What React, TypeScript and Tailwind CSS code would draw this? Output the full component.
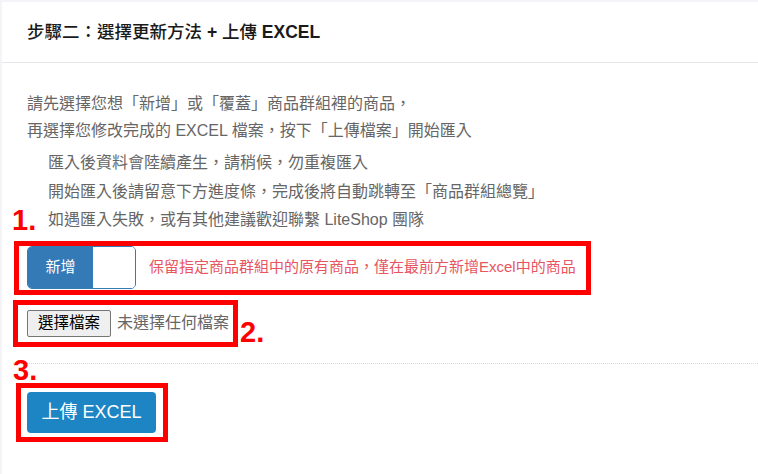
export default function App() {
  const font = { fontFamily: '"Liberation Sans", "Noto Sans CJK TC", sans-serif' };

  return (
    <div className="h-[474px] w-[758px] overflow-hidden bg-[#f4f4f8] pl-[2px] pt-[2px]" style={font}>
      <div className="h-full bg-white">
        {/* header */}
        <div className="flex h-[61px] items-center border-b border-[#e6e6ea] px-[25px]">
          <h2 className="pt-[1px] text-[17.5px] font-medium text-[#1a1a1a]">
            步驟二：選擇更新方法 <span className="font-bold">+</span> 上傳 <span className="font-bold">EXCEL</span>
          </h2>
        </div>

        <div className="pl-[11px] pt-[27px]">
          <div className="pl-[14px] text-[16px] text-[#666]">
            <p className="leading-[27px]">請先選擇您想「新增」或「覆蓋」商品群組裡的商品，</p>
            <p className="leading-[27px]">再選擇您修改完成的 EXCEL 檔案，按下「上傳檔案」開始匯入</p>
            <ul className="mt-[5px] pl-[21px] leading-[28.5px]">
              <li>匯入後資料會陸續產生，請稍候，勿重複匯入</li>
              <li>開始匯入後請留意下方進度條，完成後將自動跳轉至「商品群組總覽」</li>
              <li>如遇匯入失敗，或有其他建議歡迎聯繫 LiteShop 團隊</li>
            </ul>
          </div>

          {/* step 1 */}
          <div className="relative ml-[1px] mt-[6px] w-[577px]">
            <span className="absolute left-[-2px] top-[-35px] text-[29px] font-bold leading-none text-[#ff0000]">1.</span>
            <div className="flex h-[54px] items-center border-[5px] border-[#ff0000] pl-[8px]">
              <div className="flex h-[43px] w-[109px] overflow-hidden rounded-[5px] border border-[#337ab7]">
                <div className="flex w-[65px] items-center justify-center bg-[#337ab7] text-[15px] text-white">新增</div>
                <div className="flex-1 bg-white" />
              </div>
              <span className="ml-[13px] text-[15px] text-[#e8555f]">
                保留指定商品群組中的原有商品，僅在最前方新增Excel中的商品
              </span>
            </div>
          </div>

          {/* step 2 */}
          <div className="mt-[5px] flex items-start">
            <div className="flex h-[47px] w-[225px] items-center border-[5px] border-[#ff0000] pl-[9px]">
              <button className="h-[27px] w-[84px] rounded-[2px] border border-[#767676] bg-[#efefef] text-[15.5px] text-black">
                選擇檔案
              </button>
              <span className="ml-[6px] whitespace-nowrap text-[16px] text-[#666]">未選擇任何檔案</span>
            </div>
            <span className="ml-[2px] mt-[18px] text-[29px] font-bold leading-none text-[#ff0000]">2.</span>
          </div>

          {/* step 3 */}
          <div className="relative mt-[16px] border-t border-dotted border-[#d8d8d8] pt-[19px]">
            <span className="absolute left-[0px] top-[-8px] text-[29px] font-bold leading-none text-[#ff0000]">3.</span>
            <div className="ml-[3px] w-[152px] border-[5px] border-[#ff0000] py-[4px] pl-[6px]">
              <button className="h-[41px] w-[129px] rounded-[4px] bg-[#1e85c5] text-[18px] text-white">
                上傳 EXCEL
              </button>
            </div>
          </div>
        </div>
      </div>
    </div>
  );
}
